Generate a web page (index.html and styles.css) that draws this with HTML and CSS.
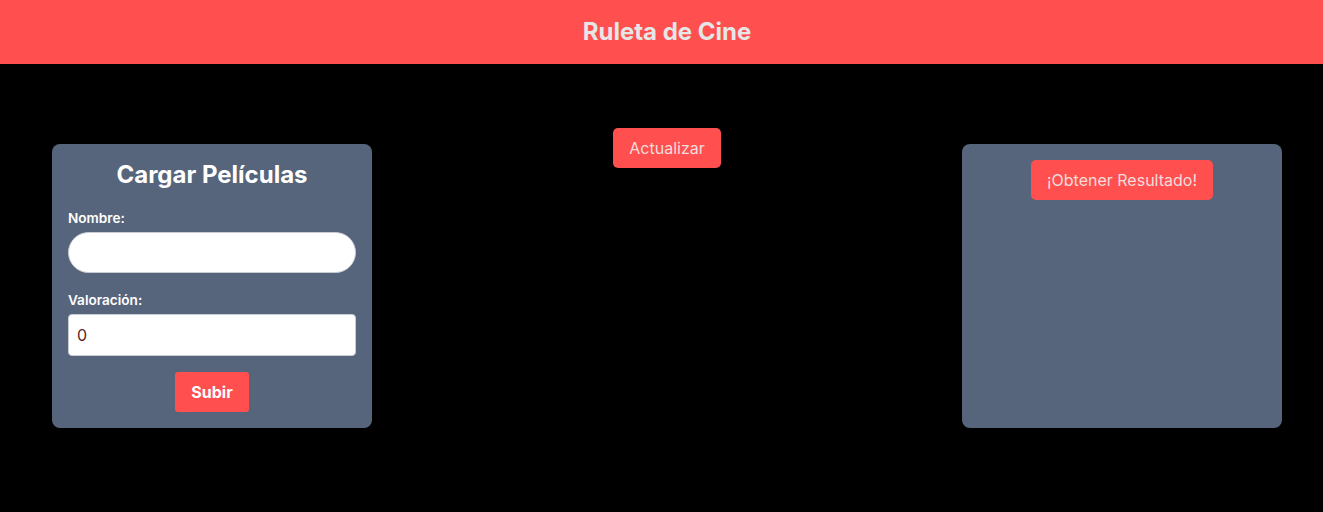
FILE: index.html
```html
<!DOCTYPE html>
<html lang="es">
<head>
<meta charset="utf-8">
<title>Ruleta de Cine</title>
<link rel="stylesheet" href="styles.css">
</head>
<body>
<header class="topbar">
  <h1 class="brand">Ruleta de Cine</h1>
</header>
<main class="layout">
  <section class="card">
    <h2 class="card-title">Cargar Películas</h2>
    <form class="form">
      <label class="label" for="nombre">Nombre:</label>
      <input class="input input-round" id="nombre" type="text">
      <label class="label" for="valoracion">Valoración:</label>
      <input class="input" id="valoracion" type="number" value="0">
      <div class="form-actions">
        <button class="btn btn-bold" type="button">Subir</button>
      </div>
    </form>
  </section>
  <div class="center">
    <button class="btn" type="button">Actualizar</button>
  </div>
  <section class="card card-result">
    <button class="btn" type="button">¡Obtener Resultado!</button>
  </section>
</main>
</body>
</html>
```
FILE: styles.css
```css
* { box-sizing: border-box; }
html, body { margin: 0; padding: 0; }
body {
  background: #000;
  font-family: Inter, "Noto Sans", sans-serif;
  height: 512px;
  overflow: hidden;
}
.topbar {
  height: 64px;
  background: #ff4f4f;
  display: flex;
  align-items: center;
  justify-content: center;
  padding-left: 11px;
}
.brand {
  margin: 0;
  font-size: 24px;
  font-weight: 700;
  color: #e6e6e6;
  line-height: 1;
}
.layout {
  display: flex;
  justify-content: space-between;
  align-items: flex-start;
  padding: 64px 41px 0 52px;
}
.card {
  width: 320px;
  height: 284px;
  margin-top: 16px;
  background: #56657b;
  border-radius: 8px;
  padding: 16px;
}
.card-title {
  margin: 0 0 20px;
  text-align: center;
  color: #fff;
  font-size: 24px;
  font-weight: 700;
  line-height: 30px;
}
.form { display: flex; flex-direction: column; }
.label {
  color: #fff;
  font-size: 13.6px;
  font-weight: 600;
  line-height: 16px;
  margin-bottom: 6px;
}
.input {
  width: 100%;
  height: 42px;
  border: 1px solid #c9ccd2;
  border-radius: 4px;
  background: #fff;
  font-family: inherit;
  font-size: 16px;
  padding: 0 8px;
  color: #5a1f2a;
  margin-bottom: 20px;
  outline: none;
}
.input-round { border-radius: 21px; height: 41px; margin-bottom: 19px; }
.input[type=number]::-webkit-inner-spin-button,
.input[type=number]::-webkit-outer-spin-button { -webkit-appearance: none; margin: 0; }
.form-actions { display: flex; justify-content: center; margin-top: -4px; }
.btn {
  height: 40px;
  padding: 0 16px;
  border: none;
  border-radius: 5px;
  background: #ff4f4f;
  color: #f3dcdc;
  font-family: inherit;
  font-size: 16px;
  font-weight: 400;
  cursor: pointer;
}
.btn-bold { color: #fff; font-weight: 700; border-radius: 3px; }
.center { display: flex; justify-content: center; }
.card-result { display: flex; justify-content: center; align-items: flex-start; }
```
